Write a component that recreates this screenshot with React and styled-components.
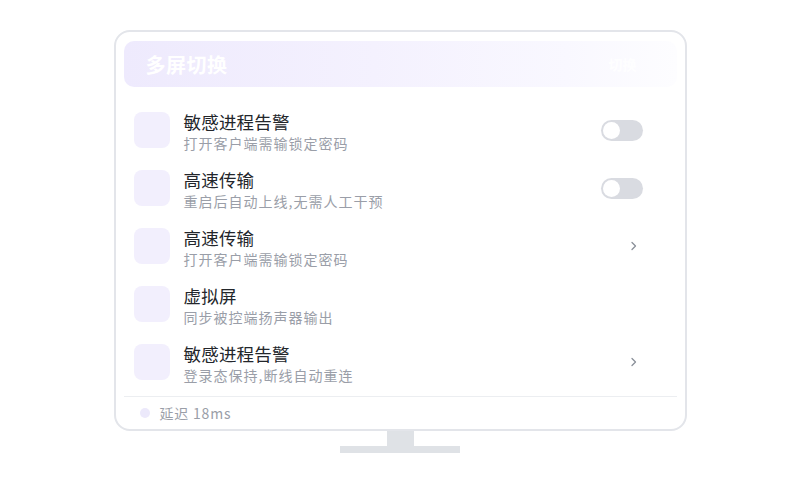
import styled, { createGlobalStyle } from "styled-components";

const GlobalStyle = createGlobalStyle`
  html, body {
    margin: 0;
    padding: 0;
    background: #ffffff;
    font-family: "Noto Sans CJK SC", "Noto Sans", sans-serif;
  }
`;

const items = [
  { title: "敏感进程告警", desc: "打开客户端需输锁定密码", action: "toggle" },
  { title: "高速传输", desc: "重启后自动上线,无需人工干预", action: "toggle" },
  { title: "高速传输", desc: "打开客户端需输锁定密码", action: "chevron" },
  { title: "虚拟屏", desc: "同步被控端扬声器输出", action: null },
  { title: "敏感进程告警", desc: "登录态保持,断线自动重连", action: "chevron" },
];

const Chevron = () => (
  <svg width="8" height="12" viewBox="0 0 8 12" fill="none">
    <path d="M2 2.5L5.5 6L2 9.5" stroke="#8a8f99" strokeWidth="1.3" strokeLinecap="round" strokeLinejoin="round" />
  </svg>
);

const App = () => {
  return (
    <Page>
      <GlobalStyle />
      <Monitor>
        <Header>
          <HeaderTitle>多屏切换</HeaderTitle>
          <HeaderGhost>切换</HeaderGhost>
        </Header>
        <List>
          {items.map((item, i) => (
            <Row key={i}>
              <IconBox />
              <TextBlock>
                <Title>{item.title}</Title>
                <Desc>{item.desc}</Desc>
              </TextBlock>
              <Action>
                {item.action === "toggle" && (
                  <Toggle>
                    <Knob />
                  </Toggle>
                )}
                {item.action === "chevron" && (
                  <ChevronWrap>
                    <Chevron />
                  </ChevronWrap>
                )}
              </Action>
            </Row>
          ))}
        </List>
        <Footer>
          <Dot />
          <FooterText>延迟 18ms</FooterText>
        </Footer>
      </Monitor>
      <Neck />
      <Base />
    </Page>
  );
};

const Page = styled.div`
  width: 800px;
  height: 500px;
  display: flex;
  flex-direction: column;
  align-items: center;
  padding-top: 30px;
  box-sizing: border-box;
`;

const Monitor = styled.div`
  width: 573px;
  box-sizing: border-box;
  border: 2px solid #e3e5ea;
  border-radius: 16px;
  padding: 9px 8px 0 8px;
  background: #ffffff;
`;

const Header = styled.div`
  height: 46px;
  border-radius: 10px;
  background: linear-gradient(90deg, #eeeafd 0%, #f4f1fe 45%, #f9f8ff 80%, #fdfdff 100%);
  display: flex;
  align-items: center;
  padding: 0 22px;
`;

const HeaderTitle = styled.div`
  color: #ffffff;
  font-size: 20px;
  font-weight: 700;
  letter-spacing: 0.5px;
`;

const HeaderGhost = styled.div`
  margin-left: auto;
  margin-right: 18px;
  color: rgba(255, 255, 255, 0.9);
  font-size: 14px;
  font-weight: 700;
`;

const List = styled.div`
  margin-top: 17px;
  display: flex;
  flex-direction: column;
`;

const Row = styled.div`
  height: 58px;
  box-sizing: border-box;
  padding: 7px 34px 0 10px;
  display: flex;
  align-items: flex-start;
`;

const IconBox = styled.div`
  width: 36px;
  height: 36px;
  margin-top: 1px;
  border-radius: 8px;
  background: #f2effd;
  flex-shrink: 0;
`;

const TextBlock = styled.div`
  margin-left: 14px;
  display: flex;
  flex-direction: column;
`;

const Title = styled.div`
  font-size: 17.5px;
  line-height: 22px;
  letter-spacing: 0.2px;
  color: #23262b;
`;

const Desc = styled.div`
  font-size: 14px;
  line-height: 20px;
  letter-spacing: 1px;
  color: #9a9ea8;
`;

const Action = styled.div`
  margin-left: auto;
  margin-top: 1px;
  height: 36px;
  display: flex;
  align-items: center;
  justify-content: flex-end;
`;

const Toggle = styled.div`
  width: 42px;
  height: 21px;
  border-radius: 11px;
  background: #d9dbe1;
  position: relative;
`;

const Knob = styled.div`
  position: absolute;
  left: 2px;
  top: 2px;
  width: 17px;
  height: 17px;
  border-radius: 50%;
  background: #ffffff;
`;

const ChevronWrap = styled.div`
  display: flex;
  margin-right: 5px;
`;

const Footer = styled.div`
  margin-top: 2px;
  border-top: 1px solid #eceef1;
  height: 32px;
  display: flex;
  align-items: center;
  padding-left: 16px;
`;

const Dot = styled.div`
  width: 10px;
  height: 10px;
  border-radius: 50%;
  background: #ece9fb;
`;

const FooterText = styled.div`
  margin-left: 10px;
  font-size: 14px;
  letter-spacing: 0.8px;
  color: #9a9ea8;
`;

const Neck = styled.div`
  width: 27px;
  height: 15px;
  background: #dfe2e6;
`;

const Base = styled.div`
  width: 120px;
  height: 7px;
  background: #dfe2e6;
`;

export default App;
